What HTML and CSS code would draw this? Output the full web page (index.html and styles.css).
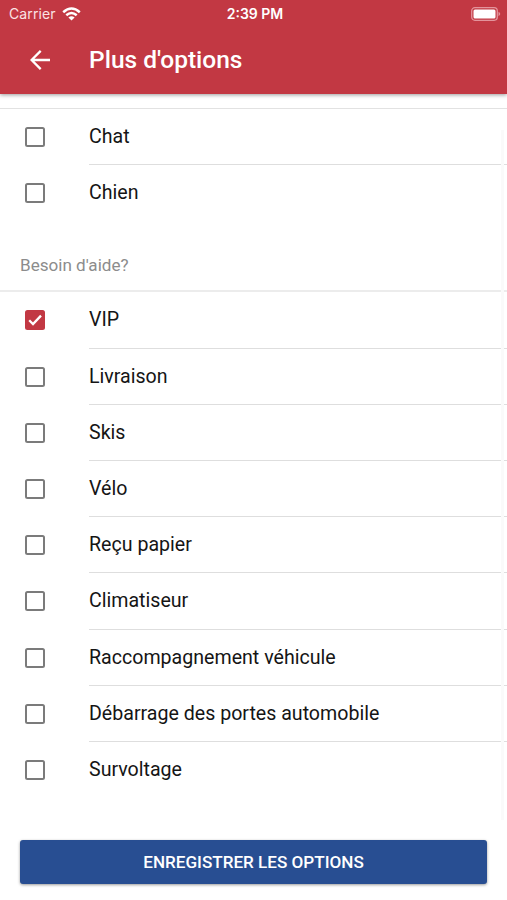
FILE: index.html
```html
<!DOCTYPE html>
<html lang="fr">
<head>
<meta charset="utf-8">
<title>Plus d'options</title>
<link rel="stylesheet" href="styles.css">
</head>
<body>
<div class="screen">
  <header class="header">
    <div class="status">
      <div class="carrier"><span class="carrier-name">Carrier</span>
        <svg class="wifi" viewBox="0 0 19 14" width="19" height="14" fill="none" stroke="#fff" stroke-width="2.5"><path d="M1.2 5.2Q9.5-2.2 17.8 5.2M4.3 8.3Q9.5 3.8 14.7 8.3"/><path d="M9.5 13.6 6.4 10.5Q9.5 8 12.6 10.5Z" fill="#fff" stroke="none"/></svg>
      </div>
      <span class="time">2:39 PM</span>
      <svg class="battery" viewBox="0 0 30 14" width="30" height="14"><rect x=".7" y=".7" width="25.6" height="12.6" rx="3.2" fill="none" stroke="#e3949c" stroke-width="1.3"/><rect x="2.5" y="2.5" width="22" height="9" rx="1.5" fill="#fff"/><path d="M27.5 4.8Q31 7 27.5 9.2Z" fill="#e3949c"/></svg>
    </div>
    <div class="toolbar">
      <svg class="back" viewBox="0 0 20 20" width="20" height="20" fill="none" stroke="#fff" stroke-width="2.3"><path d="M20 10H2M10.7 .9 1.6 10l9.1 9.1"/></svg>
      <h1 class="title">Plus d'options</h1>
    </div>
  </header>
  <main class="content">
    <ul class="list pets">
      <li class="row"><span class="box"></span><span class="label">Chat</span></li>
      <li class="row"><span class="box"></span><span class="label">Chien</span></li>
    </ul>
    <h2 class="section">Besoin d'aide?</h2>
    <ul class="list">
      <li class="row"><span class="box checked"><svg viewBox="0 0 20 20" width="20" height="20" fill="none" stroke="#fff" stroke-width="2.3"><path d="m4.2 10.3 3.8 3.8 8-8.5"/></svg></span><span class="label">VIP</span></li>
      <li class="row"><span class="box"></span><span class="label">Livraison</span></li>
      <li class="row"><span class="box"></span><span class="label">Skis</span></li>
      <li class="row"><span class="box"></span><span class="label">Vélo</span></li>
      <li class="row"><span class="box"></span><span class="label">Reçu papier</span></li>
      <li class="row"><span class="box"></span><span class="label">Climatiseur</span></li>
      <li class="row"><span class="box"></span><span class="label">Raccompagnement véhicule</span></li>
      <li class="row"><span class="box"></span><span class="label">Débarrage des portes automobile</span></li>
      <li class="row"><span class="box"></span><span class="label">Survoltage</span></li>
    </ul>
    <div class="scrollbar"></div>
  </main>
  <footer class="footer"><button class="save">ENREGISTRER LES OPTIONS</button></footer>
</div>
</body>
</html>
```

FILE: styles.css
```css
* { box-sizing: border-box; }
body { margin: 0; background: #fff; font-family: Roboto, sans-serif; color: #151515; }
.screen { width: 507px; height: 900px; display: flex; flex-direction: column; overflow: hidden; }
.header { height: 94px; flex: none; background: #c23843; color: #fff; box-shadow: 0 1px 4px rgba(0,0,0,.4); }
.status { height: 27px; padding: 0 6px 0 9px; display: grid; grid-template-columns: 1fr auto 1fr; align-items: center; font-family: Inter, sans-serif; font-size: 14px; }
.carrier { display: flex; align-items: center; gap: 6px; color: #fbe3e5; }
.carrier-name { letter-spacing: .1px; }
.time { font-weight: 600; font-size: 14px; }
.battery { justify-self: end; }
.toolbar { height: 67px; display: flex; align-items: center; padding: 0 0 1px 30px; }
.back { flex: none; }
.title { margin: 0 0 0 39px; font-size: 24.5px; font-weight: 500; line-height: 30px; }
.content { position: relative; flex: 1; padding-top: 14px; }
.list { list-style: none; margin: 0; padding: 0; border-top: 1px solid #e2e2e2; }
.row { height: 56.2px; display: flex; align-items: center; padding-left: 25px; }
.box { width: 20px; height: 20px; flex: none; border: 2px solid #7b7b7b; border-radius: 2.5px; }
.checked { border: 0; background: #c23843; }
.checked svg { display: block; }
.label { flex: 1; height: 100%; margin-left: 44px; font-size: 19.6px; line-height: 55px; border-bottom: 1px solid #dedede; }
.row:last-child .label { border-bottom: 0; }
.section { margin: 0; height: 69px; padding: 28px 0 0 20px; font-size: 17.1px; line-height: 32px; font-weight: 400; color: #8c8c8c; }
.section + .list { border-top: 2px solid #ececec; }
.scrollbar { position: absolute; right: 3px; top: 36px; width: 3px; height: 690px; background: #fafafa; }
.footer { flex: none; padding: 0 20px 16px; }
.save { display: block; width: 467px; height: 44px; border: 0; border-radius: 3px; background: #284e92; color: #fff; font: 500 17.1px/44px Roboto, sans-serif; padding: 0; box-shadow: 0 1px 3px rgba(0,0,0,.4); }
```
